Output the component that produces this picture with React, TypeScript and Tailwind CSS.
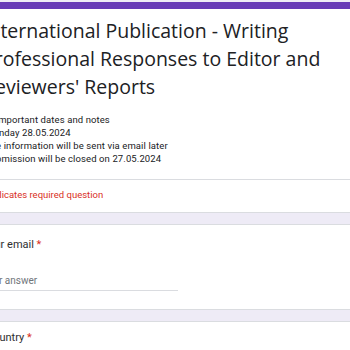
// Google Forms style header + first questions (cropped view)

const body = "font-['Roboto',_'Liberation_Sans',_sans-serif]";
const heading = "font-['Open_Sans',_'Liberation_Sans',_sans-serif]";

function Card({ children, top }: { children: React.ReactNode; top?: boolean }) {
  return (
    <div
      className={
        "bg-white rounded-lg border border-[#dadce0] " +
        (top ? "border-t-[7px] border-t-[#673ab7]" : "")
      }
    >
      {children}
    </div>
  );
}

function Question({
  label,
  placeholder,
  pad,
}: {
  label: string;
  placeholder?: string;
  pad: string;
}) {
  return (
    <Card>
      <div className={pad}>
        <div className={`${body} text-[11px] leading-[16px] text-[#2d2e31]`}>
          {label} <span className="text-[#d93025]">*</span>
        </div>
        {placeholder && (
          <div
            className={`${body} mt-[22px] w-[196px] border-b border-[#dadce0] pb-[3px] text-[10px] leading-[12px] text-[#70757a]`}
          >
            {placeholder}
          </div>
        )}
      </div>
    </Card>
  );
}

export default function App() {
  return (
    <div className="w-[350px] h-[350px] overflow-hidden bg-[#eeebf6]">
      <div className="ml-[-40px] w-[430px] pt-[2px] flex flex-col gap-[11px]">
        <Card top>
          <div className="pl-[24px] pt-[8px] pb-[14px]">
            <h1 className={`${heading} ml-[-2px] text-[19.5px] leading-[28px] text-[#202124]`}>
              International Publication - Writing
              <br />
              Professional Responses to Editor and
              <br />
              Reviewers' Reports
            </h1>
            <div className={`${body} mt-[12px] text-[9.5px] leading-[13px] tracking-[0.1px] text-[#202124]`}>
              <div>1. Important dates and notes</div>
              <div>Monday 28.05.2024</div>
              <div>The information will be sent via email later</div>
              <div>Submission will be closed on 27.05.2024</div>
            </div>
          </div>
          <div
            className={`${body} border-t border-[#dadce0] pl-[21px] pt-[8px] pb-[11px] text-[9.5px] leading-[13px] text-[#d93025]`}
          >
            * Indicates required question
          </div>
        </Card>
        <Question label="Your email" placeholder="Your answer" pad="pl-[21px] pt-[12px] pb-[18px]" />
        <Question label="Country" pad="pl-[25px] pt-[8px] pb-[18px]" />
      </div>
    </div>
  );
}
